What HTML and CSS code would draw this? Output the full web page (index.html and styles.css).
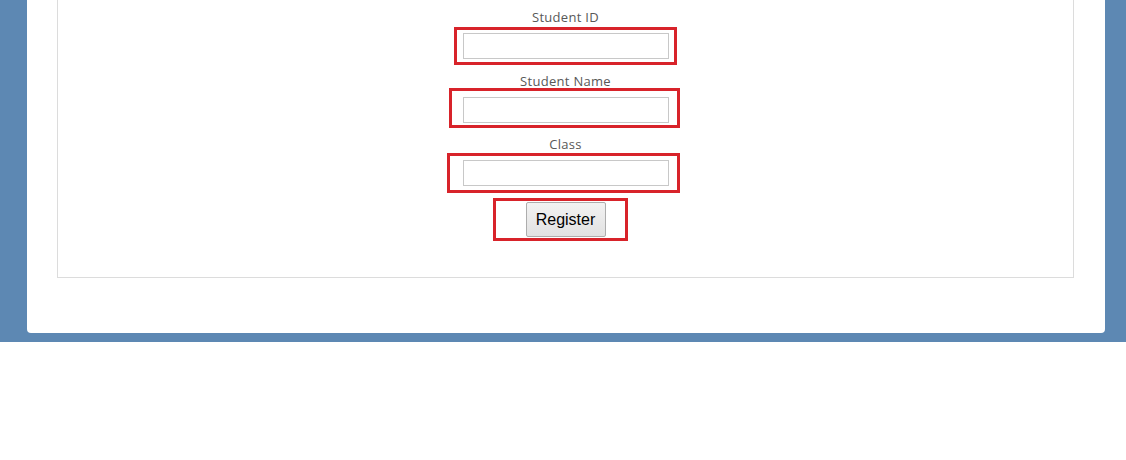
FILE: index.html
```html
<!DOCTYPE html>
<html lang="en">
<head>
<meta charset="utf-8">
<title>Register Student</title>
<link rel="stylesheet" href="styles.css">
</head>
<body>
<div class="backdrop">
  <div class="panel">
    <form class="form-box">
      <div class="field">
        <label class="field-label" for="sid">Student ID</label>
        <span class="mark mark-1"><input class="text-input" id="sid" type="text"></span>
      </div>
      <div class="field">
        <label class="field-label" for="sname">Student Name</label>
        <span class="mark mark-2"><input class="text-input" id="sname" type="text"></span>
      </div>
      <div class="field">
        <label class="field-label" for="sclass">Class</label>
        <span class="mark mark-3"><input class="text-input" id="sclass" type="text"></span>
      </div>
      <span class="mark mark-4"><button class="btn" type="button">Register</button></span>
    </form>
  </div>
</div>
</body>
</html>
```
FILE: styles.css
```css
html, body {
  margin: 0;
  padding: 0;
  background: #ffffff;
}

.backdrop {
  background: #5d88b3;
  padding: 0 21px 9px 27px;
}

.panel {
  background: #ffffff;
  border-radius: 0 0 4px 4px;
  padding: 0 31px 55px 30px;
}

.form-box {
  border: 1px solid #dcdcdc;
  border-top: 0;
  display: flex;
  flex-direction: column;
  align-items: center;
  padding: 8px 0 40px;
  margin: 0;
}

.field {
  display: flex;
  flex-direction: column;
  align-items: center;
  margin-bottom: 13px;
}

.field:nth-child(2) {
  margin-bottom: 12px;
}

.field:nth-child(3) {
  margin-bottom: 16px;
}

.field-label {
  font-family: "Open Sans", "DejaVu Sans", sans-serif;
  font-size: 13px;
  line-height: 18px;
  color: #585858;
  letter-spacing: 0.3px;
  margin-bottom: 7px;
}

.mark {
  position: relative;
  display: block;
}

.mark::after {
  content: "";
  position: absolute;
  border: 3px solid #d8232a;
  pointer-events: none;
}

.mark-1::after { top: -6px; bottom: -6px; left: -9px; right: -8px; }
.mark-2::after { top: -9px; bottom: -5px; left: -14px; right: -11px; }
.mark-3::after { top: -7px; bottom: -7px; left: -16px; right: -11px; }
.mark-4::after { top: -4px; bottom: -4px; left: -33px; right: -22px; }

.text-input {
  display: block;
  box-sizing: border-box;
  width: 206px;
  height: 26px;
  margin: 0;
  border: 1px solid #c8c8c8;
  background: #ffffff;
  padding: 2px 4px;
}

.btn {
  display: block;
  box-sizing: border-box;
  width: 80px;
  height: 35px;
  margin: 0;
  border: 1px solid #adadad;
  border-radius: 2px;
  background: linear-gradient(#f2f2f2, #e2e2e2);
  font-family: "Liberation Sans", Arial, sans-serif;
  font-size: 16px;
  color: #000000;
  padding: 0;
}
```
